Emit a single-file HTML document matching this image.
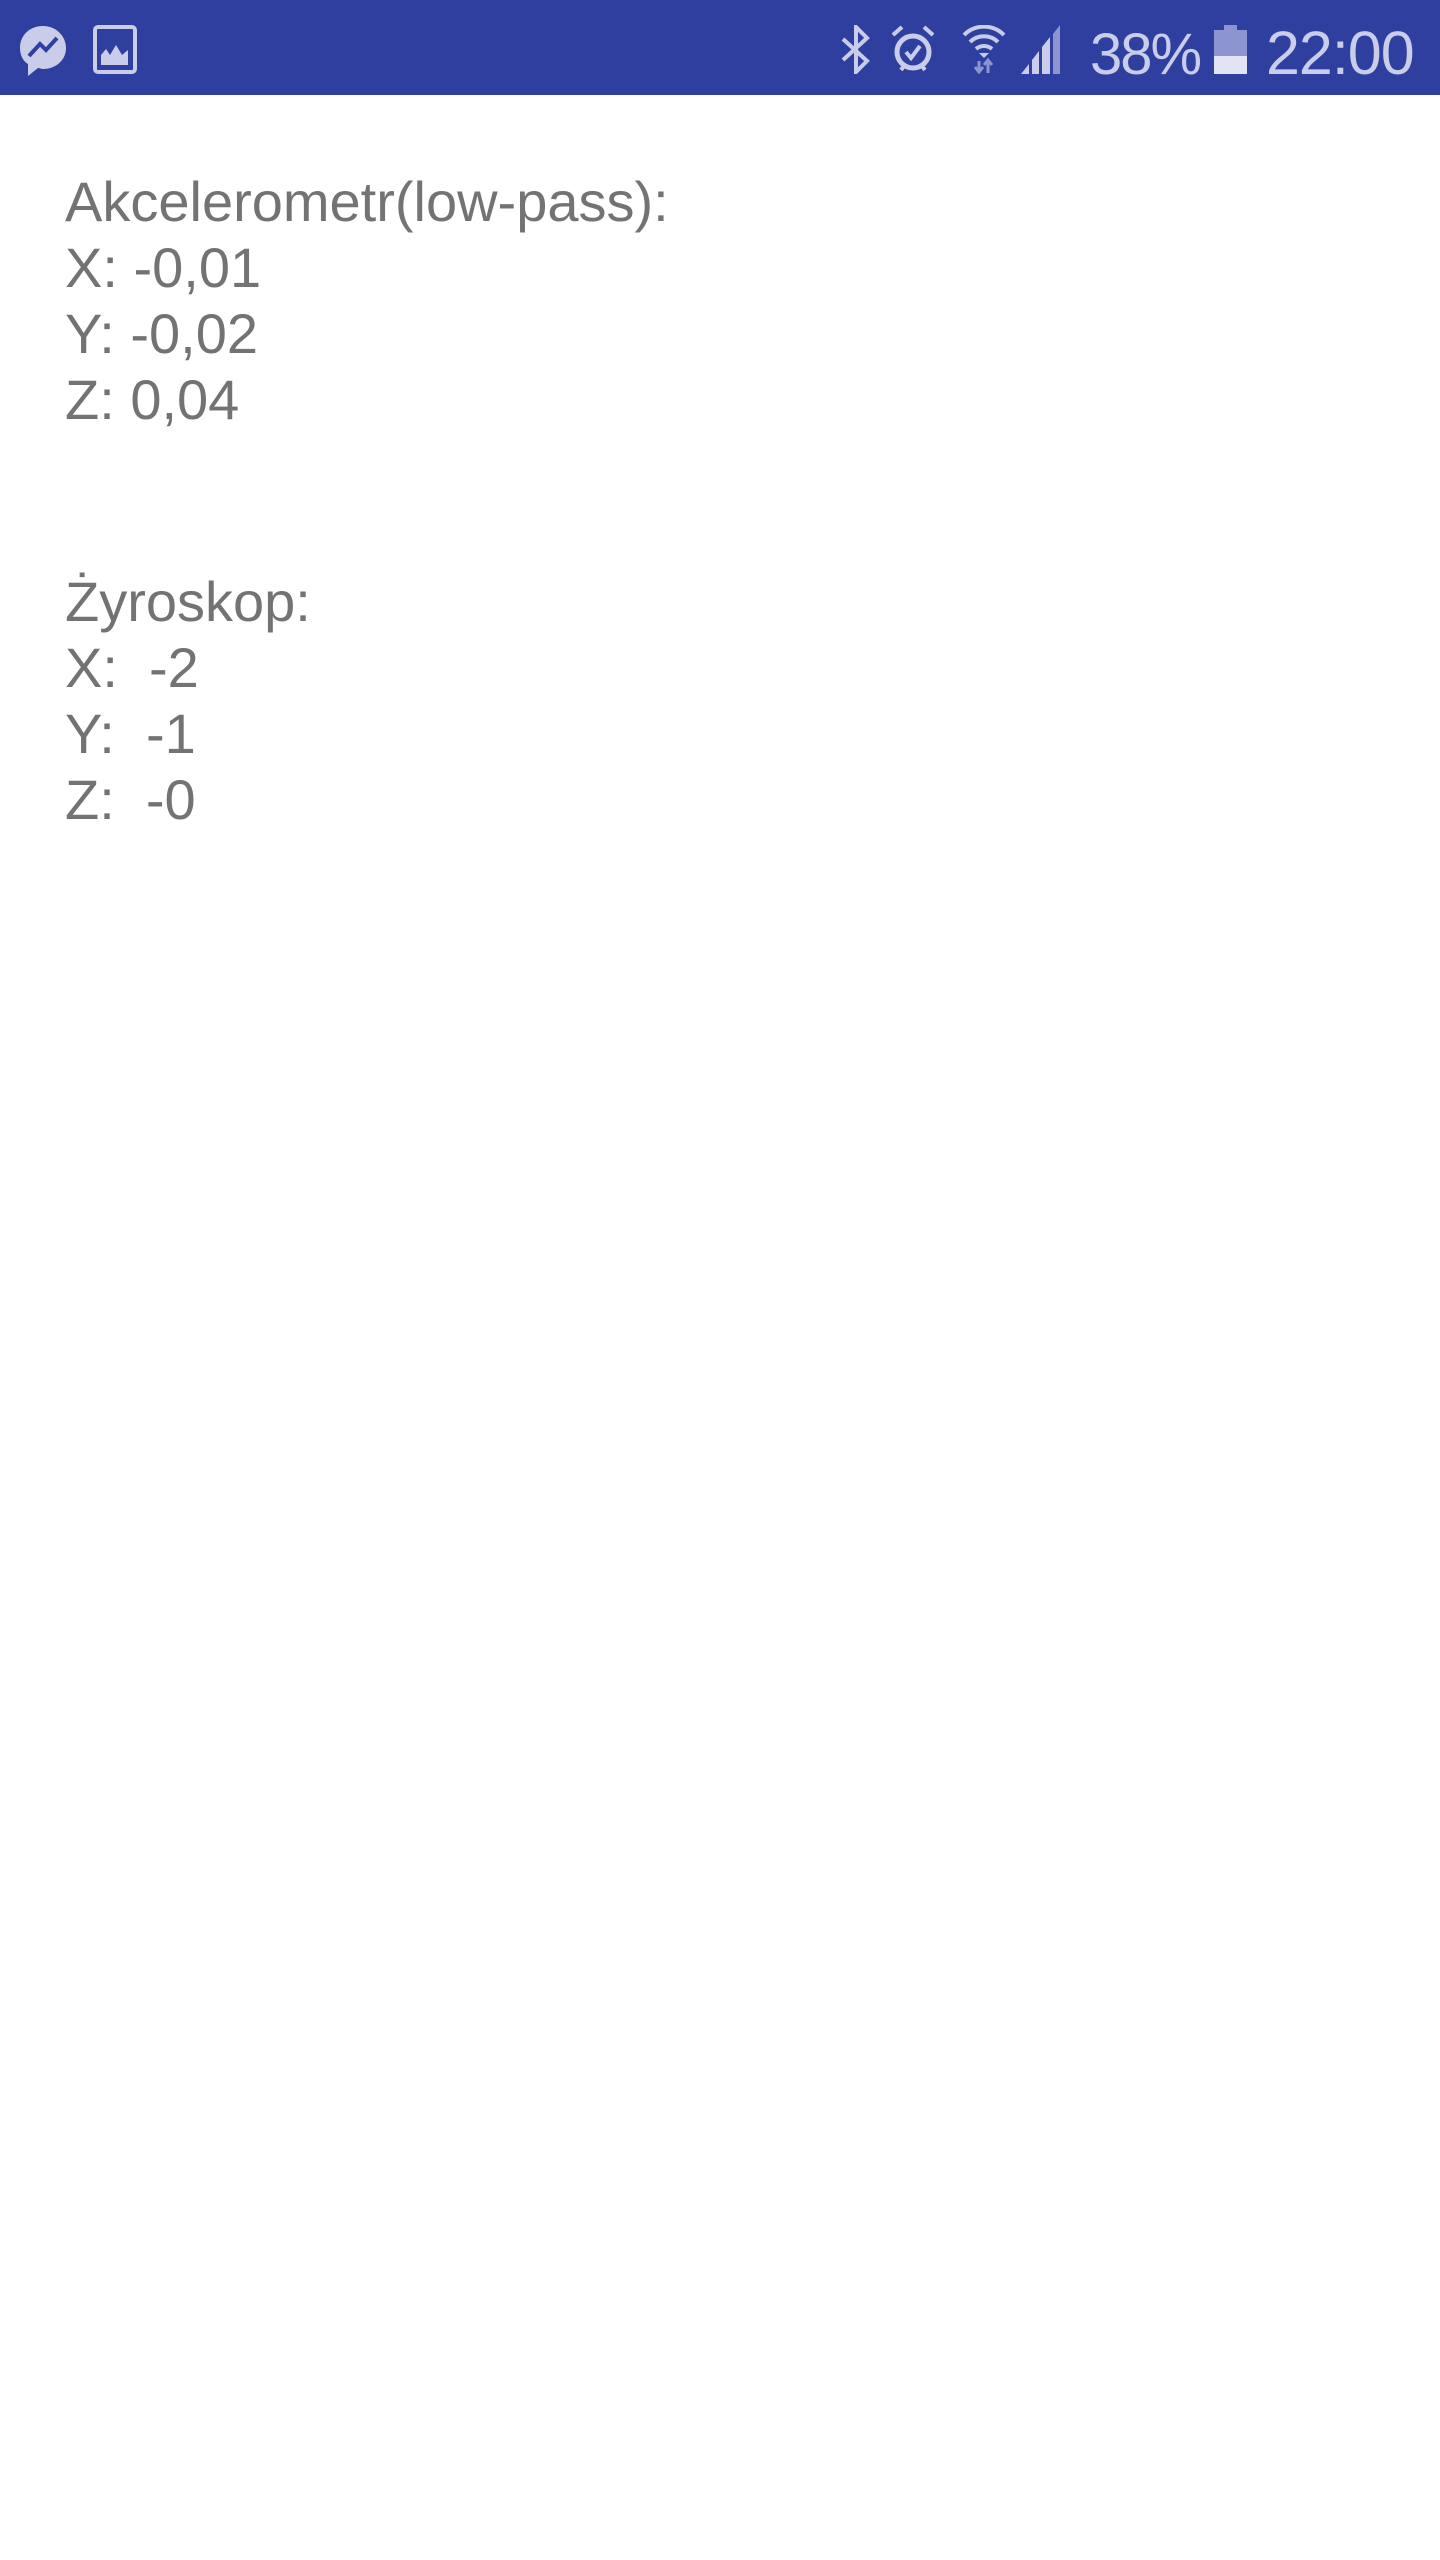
<!DOCTYPE html>
<html><head><meta charset="utf-8"><style>
*{margin:0;padding:0}
body{width:1440px;height:2560px;background:#fff;position:relative;overflow:hidden;font-family:"Liberation Sans",sans-serif}
.bar{position:absolute;left:0;top:0;width:1440px;height:95px;background:#2f3f9f}
.st{position:absolute;color:#c9cde9;font-size:61px;top:18px;line-height:70px;letter-spacing:-1px}
.t{position:absolute;left:65px;color:#737373;font-size:56px;line-height:60px;white-space:pre;letter-spacing:0px}
svg{position:absolute}
</style></head><body>
<div class="bar">
<svg style="left:18px;top:24px" width="50" height="54" viewBox="0 0 50 54"><path d="M25 2C12 2 2 11 2 24c0 7 3 13 8 16v12l10-8c2 0 3 1 5 1 13 0 23-9 23-21S38 2 25 2z" fill="#c9cde9"/><path d="M11 32l11-12 6 6 11-12-11 12-6-6z" stroke="#2f3f9f" stroke-width="4" fill="#2f3f9f"/></svg>
<svg style="left:93px;top:25px" width="44" height="49" viewBox="0 0 44 49"><rect x="2" y="2" width="40" height="45" rx="3" fill="none" stroke="#c9cde9" stroke-width="4"/><path d="M8 40V30l5-6 4 6 6-10 6 10 6-5v15z" fill="#c9cde9"/></svg>
<svg style="left:839px;top:25px" width="34" height="49" viewBox="0 0 34 49"><path d="M4 14l24 22-11 11V2l11 11L4 35" fill="none" stroke="#c9cde9" stroke-width="4"/></svg>
<svg style="left:891px;top:25px" width="44" height="49" viewBox="0 0 44 49"><circle cx="22" cy="27" r="16" fill="none" stroke="#c9cde9" stroke-width="5"/><path d="M2 10l9-8M42 10l-9-8M15 27l5 6 9-12M10 45l3-4M34 45l-3-4" stroke="#c9cde9" stroke-width="4" fill="none"/></svg>
<svg style="left:962px;top:25px" width="44" height="49" viewBox="0 0 44 49"><path d="M2 10a28 28 0 0 1 40 0M8 17a20 20 0 0 1 28 0M14 24a12 12 0 0 1 16 0" stroke="#c9cde9" stroke-width="4" fill="none"/><path d="M17 28l5 5 5-5z" fill="#c9cde9"/><path d="M17 36v10M13 42l4 5 4-5M26 48v-12M22 40l4-5 4 5" stroke="#8c95cf" stroke-width="3" fill="none"/></svg>
<svg style="left:1021px;top:25px" width="49" height="49" viewBox="0 0 49 49"><path d="M0 49l8-10v10zM11 49V35l7-9v23zM21 49V22l8-10v37z" fill="#c9cde9"/><path d="M32 49V9l7-9v49z" fill="#8c95cf"/></svg>
<div class="st" style="left:1090px;font-size:58px;letter-spacing:-2px;top:20px">38%</div>
<svg style="left:1214px;top:25px" width="33" height="49" viewBox="0 0 33 49"><rect x="10" y="0" width="13" height="5" fill="#8c95cf"/><rect x="0" y="5" width="33" height="26" fill="#8c95cf"/><rect x="0" y="31" width="33" height="18" fill="#e2e4f3"/></svg>
<div class="st" style="left:1266px">22:00</div>
</div>
<div class="t" style="top:172px">Akcelerometr(low-pass):</div>
<div class="t" style="top:238px">X: -0,01</div>
<div class="t" style="top:304px">Y: -0,02</div>
<div class="t" style="top:370px">Z: 0,04</div>
<div class="t" style="top:572px">Żyroskop:</div>
<div class="t" style="top:638px">X:  -2</div>
<div class="t" style="top:704px">Y:  -1</div>
<div class="t" style="top:770px">Z:  -0</div>
</body></html>
